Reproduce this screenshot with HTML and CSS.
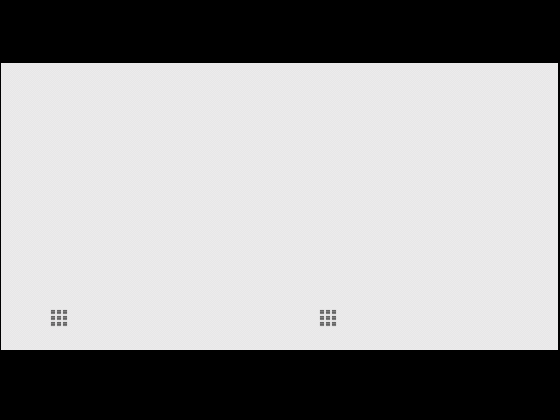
FILE: index.html
```html
<!DOCTYPE html>
<html lang="en">
<head>
    <meta charset="UTF-8">
    <meta name="viewport" content="width=device-width, initial-scale=1.0">
    <title>Launcher</title>
    <link rel="stylesheet" href="styles.css">
</head>
<body>
    <div class="screen">
        <div class="pane">
            <div class="apps-button">
                <span></span><span></span><span></span>
                <span></span><span></span><span></span>
                <span></span><span></span><span></span>
            </div>
        </div>
        <div class="pane">
            <div class="apps-button">
                <span></span><span></span><span></span>
                <span></span><span></span><span></span>
                <span></span><span></span><span></span>
            </div>
        </div>
    </div>
</body>
</html>
```

FILE: styles.css
```css
/* Black letterbox around the screen */
body {
    margin: 0;
    height: 420px;
    overflow: hidden;
    background-color: #000;
    padding: 63px 2px 0 1px;
    box-sizing: border-box;
}

/* Dithered light grey surface */
.screen {
    display: flex;
    height: 287px;
    background-color: #eaeaea;
    background-image: repeating-conic-gradient(#e7e7e7 0 25%, #ecebec 0 50%);
    background-size: 2px 2px;
}

.pane {
    display: flex;
    align-items: flex-end;
    box-sizing: border-box;
    padding: 0 0 24px 50px;
}

.pane:first-child {
    width: 269px;
}

.apps-button {
    display: grid;
    grid-template-columns: repeat(3, 4px);
    grid-auto-rows: 4px;
    gap: 2px;
}

/* Soft edge so the dots keep the blur of the original */
.apps-button span {
    background-image: repeating-linear-gradient(#646464 0 1px, #7c7c7c 1px 2px);
    box-shadow: 0 0 1px rgba(110, 110, 110, 0.7);
}
```
